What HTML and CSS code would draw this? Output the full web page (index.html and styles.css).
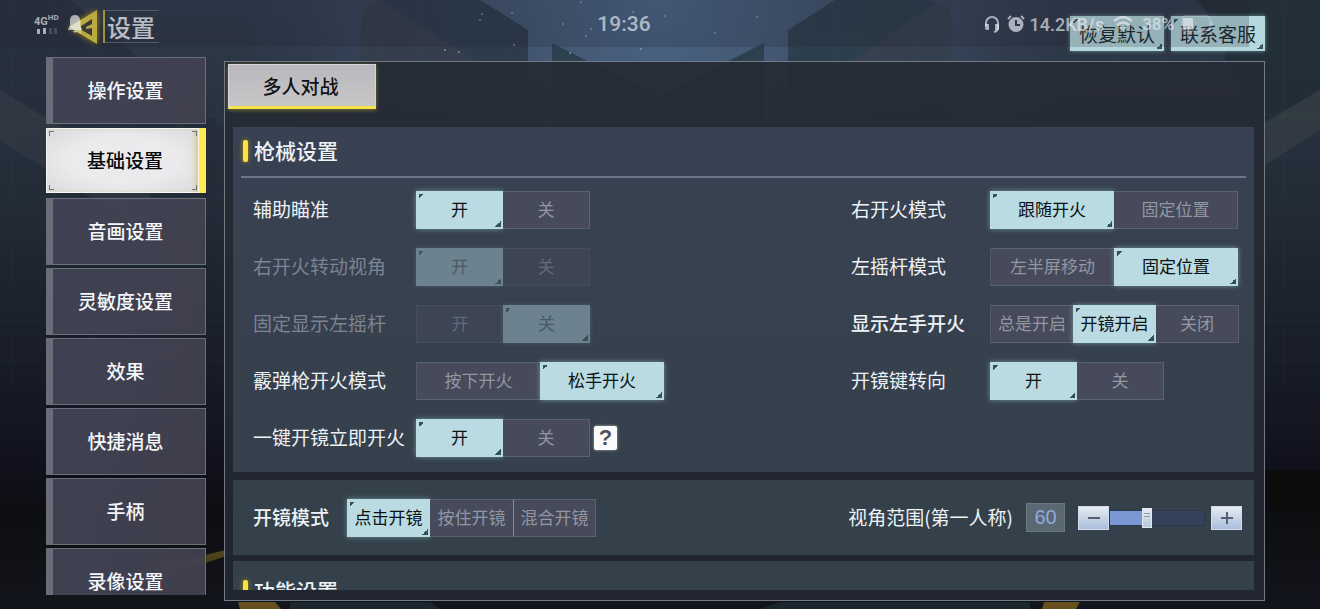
FILE: index.html
```html
<!DOCTYPE html>
<html lang="zh-CN">
<head>
<meta charset="utf-8">
<meta name="viewport" content="width=device-width, initial-scale=1">
<title>设置</title>
<link rel="stylesheet" href="styles.css">
</head>
<body>
<svg class="backdrop" viewBox="0 0 1320 609" preserveAspectRatio="xMidYMid slice" aria-hidden="true">
  <defs>
    <linearGradient id="base" x1="0" y1="0" x2="0" y2="1">
      <stop offset="0" stop-color="#303b4b"/><stop offset=".3" stop-color="#232d38"/>
      <stop offset=".62" stop-color="#171b27"/><stop offset=".78" stop-color="#10101b"/>
      <stop offset=".85" stop-color="#0d0e10"/><stop offset="1" stop-color="#13151c"/>
    </linearGradient>
    <radialGradient id="sky" gradientUnits="userSpaceOnUse" cx="660" cy="0" r="430">
      <stop offset="0" stop-color="#4b6685"/><stop offset=".55" stop-color="#43536f" stop-opacity=".75"/>
      <stop offset="1" stop-color="#354257" stop-opacity="0"/>
    </radialGradient>
    <pattern id="grid" width="41" height="41" patternUnits="userSpaceOnUse" x="12" y="33">
      <path d="M0 .5H41M.5 0V41" stroke="#8ab0c0" stroke-opacity=".03"/>
    </pattern>
    <linearGradient id="beam" x1="0" y1="1" x2="1" y2="0">
      <stop offset="0" stop-color="#8c7420" stop-opacity="0"/><stop offset="1" stop-color="#a08424" stop-opacity=".5"/>
    </linearGradient>
  </defs>
  <rect width="1320" height="609" fill="url(#base)"/>
  <rect width="1320" height="300" fill="url(#sky)"/>
  <path d="M0 0H70L225 130V230L0 90Z" fill="#252b38" opacity=".6"/>
  <path d="M0 90L150 180V235L0 140Z" fill="#343b46" opacity=".6"/>
  <path d="M378 0H480L528 30V200H361V12Z" fill="#293847" opacity=".85"/>
  <path d="M380 0L490 70H361V0Z" fill="#39404e" opacity=".7"/>
  <path d="M835 0H930L951 8V200H788V30Z" fill="#293c48" opacity=".85"/>
  <path d="M940 0L840 70H951V0Z" fill="#3b4251" opacity=".7"/>
  <path d="M552 43L658 97L764 43V200H552Z" fill="#2c4050"/>
  <path d="M1195 0H1320V90L1265 125L1225 62V30Z" fill="#202d35" opacity=".8"/>
  <path d="M1320 90L1265 122V165L1320 130Z" fill="#363f45" opacity=".7"/>
  <path d="M1265 470H1320V510H1265Z" fill="#0b0c0b"/>
  <rect width="1320" height="390" fill="url(#grid)"/>
  <path d="M100 580L230 549V555L120 590Z" fill="url(#beam)"/>
  <path d="M238 602H275L281 609H240ZM1044 602H1080L1076 609H1042Z" fill="#66501f"/>
  <path d="M290 602H430L440 609H290ZM780 602H1030V609H760Z" fill="#1f3238" opacity=".6"/>
  <g fill="#a9bdd0" opacity=".6">
    <circle cx="482" cy="14" r="1"/><circle cx="480" cy="20" r="1"/><circle cx="512" cy="13" r="1"/><circle cx="445" cy="50" r="1"/>
    <circle cx="459" cy="52" r="1"/><circle cx="514" cy="45" r="1"/><circle cx="563" cy="24" r="1"/><circle cx="591" cy="29" r="1"/>
    <circle cx="586" cy="36" r="1"/><circle cx="570" cy="53" r="1"/><circle cx="633" cy="12" r="1"/><circle cx="581" cy="2" r="1"/>
    <circle cx="665" cy="16" r="1"/><circle cx="715" cy="33" r="1"/><circle cx="757" cy="17" r="1"/><circle cx="641" cy="49" r="1"/>
  </g>
</svg>

<div class="app">
  <header class="topbar">
    <div class="brand">
      <button class="back" type="button" aria-label="返回">
        <svg viewBox="0 0 32 38" aria-hidden="true">
          <path d="M30 2V36L2 19Z" fill="#e3cd45"/>
          <path d="M25 11V16L19 19V21L25 20V28L11 20Z" fill="#41423a"/>
          <path d="M2 19L14 12V26Z" fill="#fff08a"/>
        </svg>
      </button>
      <h1 class="title">设置</h1>
    </div>
    <div class="actions">
      <button class="action" type="button">恢复默认</button>
      <button class="action" type="button">联系客服</button>
    </div>
  </header>

  <div class="content">
    <nav class="side" aria-label="设置分类">
      <button class="side-item" type="button">操作设置</button>
      <button class="side-item side-item-active" type="button" aria-current="page"><span class="brackets"></span>基础设置</button>
      <button class="side-item" type="button">音画设置</button>
      <button class="side-item" type="button">灵敏度设置</button>
      <button class="side-item" type="button">效果</button>
      <button class="side-item" type="button">快捷消息</button>
      <button class="side-item" type="button">手柄</button>
      <button class="side-item" type="button">录像设置</button>
    </nav>

    <main class="panel">
      <button class="tab" type="button">多人对战</button>
      <div class="scroller">
        <section class="card">
          <h2 class="section-title">枪械设置</h2>
          <div class="columns">
            <div class="column">
              <div class="row" role="radiogroup" aria-labelledby="l1">
                <span class="label" id="l1">辅助瞄准</span>
                <div class="segments">
                  <label class="seg seg-short"><input type="radio" name="aim" checked><span>开</span></label>
                  <label class="seg seg-short"><input type="radio" name="aim"><span>关</span></label>
                </div>
              </div>
              <div class="row row-disabled" role="radiogroup" aria-labelledby="l2">
                <span class="label" id="l2">右开火转动视角</span>
                <div class="segments">
                  <label class="seg seg-short"><input type="radio" name="turn" checked disabled><span>开</span></label>
                  <label class="seg seg-short"><input type="radio" name="turn" disabled><span>关</span></label>
                </div>
              </div>
              <div class="row row-disabled" role="radiogroup" aria-labelledby="l3">
                <span class="label" id="l3">固定显示左摇杆</span>
                <div class="segments">
                  <label class="seg seg-short"><input type="radio" name="stick" disabled><span>开</span></label>
                  <label class="seg seg-short"><input type="radio" name="stick" checked disabled><span>关</span></label>
                </div>
              </div>
              <div class="row" role="radiogroup" aria-labelledby="l4">
                <span class="label" id="l4">霰弹枪开火模式</span>
                <div class="segments">
                  <label class="seg seg-wide"><input type="radio" name="shotgun"><span>按下开火</span></label>
                  <label class="seg seg-wide"><input type="radio" name="shotgun" checked><span>松手开火</span></label>
                </div>
              </div>
              <div class="row" role="radiogroup" aria-labelledby="l5">
                <span class="label" id="l5">一键开镜立即开火</span>
                <div class="segments">
                  <label class="seg seg-short"><input type="radio" name="quick" checked><span>开</span></label>
                  <label class="seg seg-short"><input type="radio" name="quick"><span>关</span></label>
                </div>
                <button class="help" type="button">?</button>
              </div>
            </div>

            <div class="column column-right">
              <div class="row" role="radiogroup" aria-labelledby="r1">
                <span class="label" id="r1">右开火模式</span>
                <div class="segments">
                  <label class="seg seg-wide"><input type="radio" name="rfire" checked><span>跟随开火</span></label>
                  <label class="seg seg-wide"><input type="radio" name="rfire"><span>固定位置</span></label>
                </div>
              </div>
              <div class="row" role="radiogroup" aria-labelledby="r2">
                <span class="label" id="r2">左摇杆模式</span>
                <div class="segments">
                  <label class="seg seg-wide"><input type="radio" name="lstick"><span>左半屏移动</span></label>
                  <label class="seg seg-wide"><input type="radio" name="lstick" checked><span>固定位置</span></label>
                </div>
              </div>
              <div class="row" role="radiogroup" aria-labelledby="r3">
                <span class="label label-strong" id="r3">显示左手开火</span>
                <div class="segments">
                  <label class="seg seg-mid"><input type="radio" name="lfire"><span>总是开启</span></label>
                  <label class="seg seg-mid"><input type="radio" name="lfire" checked><span>开镜开启</span></label>
                  <label class="seg seg-mid"><input type="radio" name="lfire"><span>关闭</span></label>
                </div>
              </div>
              <div class="row" role="radiogroup" aria-labelledby="r4">
                <span class="label" id="r4">开镜键转向</span>
                <div class="segments">
                  <label class="seg seg-short"><input type="radio" name="scopekey" checked><span>开</span></label>
                  <label class="seg seg-short"><input type="radio" name="scopekey"><span>关</span></label>
                </div>
              </div>
            </div>
          </div>
        </section>

        <section class="card card-scope">
          <div class="row row-auto" role="radiogroup" aria-labelledby="s1">
            <span class="label label-strong" id="s1">开镜模式</span>
            <div class="segments">
              <label class="seg seg-mid"><input type="radio" name="scope" checked><span>点击开镜</span></label>
              <label class="seg seg-mid"><input type="radio" name="scope"><span>按住开镜</span></label>
              <label class="seg seg-mid seg-divided"><input type="radio" name="scope"><span>混合开镜</span></label>
            </div>
          </div>
          <div class="fov">
            <label class="label" for="fov">视角范围(第一人称)</label>
            <output class="fov-value" for="fov">60</output>
            <div class="stepper">
              <button class="step" type="button" aria-label="减少"><svg viewBox="0 0 14 14" aria-hidden="true"><path d="M1 7H13"/></svg></button>
              <input class="slider" id="fov" type="range" min="0" max="100" value="38">
              <button class="step" type="button" aria-label="增加"><svg viewBox="0 0 14 14" aria-hidden="true"><path d="M1 7H13M7 1V13"/></svg></button>
            </div>
          </div>
        </section>

        <section class="card card-next">
          <h2 class="section-title">功能设置</h2>
        </section>
      </div>
    </main>
  </div>
</div>

<div class="status">
  <div class="status-left">
    <div class="signal">
      <span class="net">4G<sup>HD</sup></span>
      <svg class="bars" viewBox="0 0 20 6" aria-hidden="true">
        <rect x="0" y="1" width="3" height="5"/><rect x="6" y="0" width="3" height="6"/>
        <rect x="12" y="0" width="3" height="6" opacity=".25"/><rect x="17" y="0" width="3" height="6" opacity=".25"/>
      </svg>
    </div>
    <svg class="bell" viewBox="0 0 14 18" aria-hidden="true"><path d="M7 0C3 0 2 3 2 6V11L0 14V15H14V14L12 11V6C12 3 11 0 7 0ZM5 16H9C9 18 5 18 5 16Z"/></svg>
  </div>
  <span class="clock">19:36</span>
  <div class="status-right">
    <svg class="headset" viewBox="0 0 16 18" aria-hidden="true"><path d="M2 11V8A6 6 0 0 1 14 8V13Q14 16 10 17" fill="none" stroke="currentColor" stroke-width="2"/><path d="M1 9H5V15H3Q1 15 1 13ZM11 9H15V13Q15 15 13 15H11Z" fill="currentColor"/></svg>
    <svg class="alarm" viewBox="0 0 18 18" aria-hidden="true"><path fill-rule="evenodd" d="M9 2A7.500 7.500 0 1 1 9 17A7.500 7.500 0 1 1 9 2ZM8 5V11H13V9H10V5Z" fill="currentColor"/><path d="M1 4L4 1M17 4L14 1" stroke="currentColor" stroke-width="2"/></svg>
    <span class="speed">14.2KB/s</span>
    <svg class="wifi" viewBox="0 0 20 16" aria-hidden="true"><path d="M1 5Q10 -3 19 5M4 9Q10 4 16 9" fill="none" stroke="currentColor" stroke-width="2.400"/><path d="M6 11.500Q10 8 14 11.500L10 16Z" fill="currentColor"/></svg>
    <span class="percent">38%</span>
    <svg class="battery" viewBox="0 0 32 18" aria-hidden="true"><rect x="1" y="1" width="28" height="15" rx="3" fill="none" stroke="currentColor" opacity=".6"/><path d="M31 6V11" stroke="currentColor" stroke-width="1.500" opacity=".6"/><rect x="2" y="3" width="10" height="11" rx="1" fill="currentColor"/></svg>
  </div>
</div>
</body>
</html>
```
FILE: styles.css
```css
* {
  box-sizing: border-box;
}

body {
  margin: 0;
  overflow: hidden;
  background: #12141d;
  color: #eef2f6;
  font-family: "Noto Sans CJK SC", "Noto Sans", sans-serif;
}

button,
input {
  margin: 0;
  padding: 0;
  border: 0;
  border-radius: 0;
  font: inherit;
}

.backdrop {
  position: absolute;
  inset: 0;
  width: 100%;
  height: 100%;
}

.app {
  position: relative;
  display: flex;
  flex-direction: column;
  height: 100vh;
  padding: 0 55px 8px 46px;
}

/* Header */
.topbar {
  display: flex;
  justify-content: space-between;
  flex: none;
  height: 57px;
}

.brand {
  display: flex;
  align-items: flex-start;
  gap: 4px;
  padding: 8px 0 0 21px;
}

.back {
  width: 32px;
  height: 38px;
  background: none;
}

.back svg {
  display: block;
  width: 32px;
  height: 38px;
  filter: drop-shadow(0 0 3px #b99b1c);
}

.title {
  width: 56px;
  margin: 2px 0 0;
  padding-left: 2px;
  border-left: 2px solid #c8b13a;
  background:
    linear-gradient(#5d6874, #5d6874) 0 0 / 100% 1px no-repeat,
    linear-gradient(#5d6874, #5d6874) 0 100% / 100% 1px no-repeat;
  color: #e2e5ea;
  font-size: 24px;
  font-weight: 500;
  line-height: 33px;
  white-space: nowrap;
}

.actions {
  display: flex;
  gap: 7px;
  padding-top: 16px;
}

.action {
  width: 94px;
  height: 35px;
  background:
    linear-gradient(135deg, #3c565e 50%, transparent 50%) 3px 3px / 5px 5px no-repeat,
    linear-gradient(315deg, #3c565e 50%, transparent 50%) calc(100% - 2px) calc(100% - 2px) / 6px 6px no-repeat,
    #b4d8dc;
  box-shadow: 0 0 4px #6d9198;
  color: #1c282d;
  font-size: 19px;
  line-height: 34px;
}

/* Body */
.content {
  display: flex;
  flex: 1;
  gap: 18px;
  min-height: 0;
}

.side {
  display: flex;
  flex: none;
  flex-direction: column;
  gap: 3px;
  width: 160px;
  margin-bottom: 6px;
  overflow: hidden;
}

.side-item {
  flex: none;
  height: 67px;
  padding: 0 7px 3px 0;
  border: 1px solid #69717a;
  border-left: 7px solid #686d77;
  background: linear-gradient(100deg, rgba(65, 67, 84, .95), rgba(66, 65, 80, .93));
  color: #f4f6f9;
  font-size: 19px;
  font-weight: 500;
}

.side-item-active {
  position: relative;
  height: 65px;
  margin: 1px 0 2px;
  padding: 0 0 3px 5px;
  border: 0;
  border-right: 7px solid #ffe94e;
  background: radial-gradient(#ebebed 50%, #d9d9dc);
  box-shadow: inset 0 0 0 1px #f5f5f5, inset -4px 0 4px #d5cd91;
  color: #08090b;
}

.brackets {
  position: absolute;
  inset: 3px 2px 3px 3px;
  background:
    linear-gradient(#747474, #747474) 0 0 / 5px 1px,
    linear-gradient(#747474, #747474) 0 0 / 1px 5px,
    linear-gradient(#747474, #747474) 100% 0 / 5px 1px,
    linear-gradient(#747474, #747474) 100% 0 / 1px 5px,
    linear-gradient(#747474, #747474) 0 100% / 5px 1px,
    linear-gradient(#747474, #747474) 0 100% / 1px 5px,
    linear-gradient(#747474, #747474) 100% 100% / 5px 1px,
    linear-gradient(#747474, #747474) 100% 100% / 1px 5px;
  background-repeat: no-repeat;
}

.panel {
  display: flex;
  flex: 1;
  flex-direction: column;
  min-width: 0;
  margin-top: 4px;
  padding: 2px 10px 10px 8px;
  border: 1px solid #707b86;
  background: linear-gradient(rgba(38, 43, 53, .93), rgba(34, 38, 51, .95));
}

.tab {
  flex: none;
  width: 148px;
  height: 45px;
  margin-left: -5px;
  padding-right: 3px;
  border: 1px solid #d5d5d7;
  border-bottom: 3px solid #f6e34c;
  background: linear-gradient(#b9b9bd, #c7c7c9);
  box-shadow: 0 1px 4px #7c7434;
  color: #101114;
  font-size: 19px;
  font-weight: 500;
  line-height: 40px;
}

.scroller {
  display: flex;
  flex: 1;
  flex-direction: column;
  min-height: 0;
  margin-top: 18px;
  overflow: hidden;
}

.card {
  flex: none;
  padding: 8px 8px 15px;
  background: linear-gradient(rgba(58, 67, 84, .92), rgba(54, 66, 77, .95));
}

.section-title {
  display: flex;
  align-items: center;
  gap: 6px;
  margin: 0;
  padding: 0 2px 10px;
  border-bottom: 2px solid #6b7787;
  font-size: 21px;
  font-weight: 500;
  line-height: 31px;
}

.section-title::before {
  width: 5px;
  height: 22px;
  border-radius: 2px;
  background: #f8e341;
  box-shadow: 0 0 5px #a58b17;
  content: "";
}

.columns {
  display: flex;
  justify-content: space-between;
  padding: 13px 7px 0 12px;
}

.column {
  display: flex;
  flex-direction: column;
  gap: 19px;
}

.row {
  display: grid;
  grid-template-columns: 163px auto auto;
  align-items: center;
  justify-content: start;
  height: 38px;
}

.column-right .row {
  grid-template-columns: 139px auto;
}

.row-auto {
  grid-template-columns: 94px auto;
}

.label {
  padding-bottom: 2px;
  font-size: 19px;
  line-height: 28px;
  white-space: nowrap;
}

.label-strong {
  font-weight: 500;
}

.row-disabled .label {
  color: #7b8492;
}

.segments {
  display: flex;
}

.seg {
  position: relative;
  display: block;
  height: 38px;
}

.seg-short {
  width: 87px;
}

.seg-mid {
  width: 83px;
}

.seg-wide {
  width: 124px;
}

.seg input {
  position: absolute;
  inset: 0;
  width: 100%;
  height: 100%;
  opacity: 0;
}

.seg span {
  display: block;
  height: 38px;
  border: 1px solid #5b6370;
  border-left-color: #515866;
  background: #464a5a;
  color: #9297a2;
  font-size: 17px;
  line-height: 34px;
  text-align: center;
  white-space: nowrap;
}

.seg:not(:last-child) span {
  border-right: 0;
}

.seg:not(:first-child) span {
  border-left: 0;
}

.seg-divided:not(:first-child) span {
  border-left: 1px solid #838995;
}

.seg input:checked + span {
  border: 0;
  background:
    linear-gradient(135deg, #35515a 50%, transparent 50%) 3px 3px / 5px 5px no-repeat,
    linear-gradient(315deg, #35515a 50%, transparent 50%) calc(100% - 2px) calc(100% - 2px) / 6px 6px no-repeat,
    #b9dbe1;
  box-shadow: 0 0 5px #72949c;
  color: #0b1114;
  line-height: 36px;
}

.row-disabled .seg span {
  border-color: #454e5c;
  background: #3d4454;
  color: #626a78;
}

.row-disabled .seg input:checked + span {
  background:
    linear-gradient(135deg, #3c505a 50%, transparent 50%) 3px 3px / 5px 5px no-repeat,
    linear-gradient(315deg, #3c505a 50%, transparent 50%) calc(100% - 2px) calc(100% - 2px) / 6px 6px no-repeat,
    #6c828e;
  box-shadow: 0 0 4px #4c606b;
  color: #4a5965;
}

.help {
  width: 23px;
  height: 24px;
  margin-left: 4px;
  border-radius: 2px;
  background: #fafafa;
  box-shadow: 0 0 3px #aeb3b8;
  color: #50545a;
  font-family: "Liberation Sans", sans-serif;
  font-size: 22px;
  font-weight: 700;
  line-height: 24px;
}

.card-scope {
  display: flex;
  align-items: center;
  justify-content: space-between;
  height: 75px;
  margin-top: 8px;
  padding: 0 12px 0 20px;
  background: rgba(54, 66, 76, .95);
}

.card-next {
  margin-top: 6px;
  padding-top: 14px;
  background: rgba(54, 66, 76, .95);
}

.fov {
  display: flex;
  align-items: center;
}

.fov-value {
  width: 39px;
  height: 29px;
  margin: 0 13px;
  border: 1px solid #69777f;
  background: #596872;
  color: #93aade;
  font-family: "Liberation Sans", sans-serif;
  font-size: 20px;
  line-height: 27px;
  text-align: center;
}

.stepper {
  display: flex;
  align-items: center;
}

.step {
  display: grid;
  place-items: center;
  width: 31px;
  height: 24px;
  border: 1px solid #d2dcea;
  background: linear-gradient(#e6ecf1, #a9bddb);
}

.step svg {
  width: 14px;
  height: 14px;
  fill: none;
  stroke: #566073;
  stroke-width: 2;
}

.slider {
  width: 96px;
  height: 24px;
  margin-right: 6px;
  appearance: none;
  background: none;
}

.slider::-webkit-slider-runnable-track {
  height: 16px;
  border: 1px solid #2b374a;
  background: linear-gradient(90deg, #7b98d4 38%, #34425a 38%);
}

.slider::-webkit-slider-thumb {
  width: 10px;
  height: 20px;
  margin-top: -3px;
  appearance: none;
  border: 1px solid #e0e8ee;
  background:
    linear-gradient(#8f9ca8, #8f9ca8) 50% 4px / 6px 1px no-repeat,
    linear-gradient(#8f9ca8, #8f9ca8) 50% 7px / 6px 1px no-repeat,
    linear-gradient(#e5ebee, #b5c7d9);
}

/* Device status overlay */
.status {
  position: absolute;
  top: 0;
  right: 71px;
  left: 0;
  display: grid;
  grid-template-columns: 1fr auto 1fr;
  align-items: center;
  height: 47px;
  padding: 0 36px 0 34px;
  background: rgba(31, 32, 46, .2);
  color: rgba(232, 236, 242, .68);
  font-family: Roboto, sans-serif;
  font-weight: 500;
  pointer-events: none;
}

.status-left {
  display: flex;
  align-items: center;
  gap: 8px;
}

.signal {
  width: 26px;
}

.net {
  display: block;
  font-size: 11px;
  font-weight: 700;
  line-height: 12px;
  white-space: nowrap;
}

.net sup {
  font-size: 8px;
  line-height: 8px;
}

.bars {
  display: block;
  width: 20px;
  height: 6px;
  margin: 0 0 0 3px;
  fill: currentColor;
}

.bell {
  width: 14px;
  height: 18px;
  fill: currentColor;
}

.clock {
  padding-left: 1px;
  font-size: 21px;
  line-height: 48px;
}

.status-right {
  display: flex;
  align-items: center;
  justify-content: flex-end;
}

.headset {
  width: 16px;
  height: 18px;
  margin-right: 7px;
}

.alarm {
  width: 18px;
  height: 18px;
  margin-right: 4px;
}

.speed {
  margin-right: 9px;
  font-size: 18px;
}

.wifi {
  width: 20px;
  height: 16px;
  margin-right: 9px;
}

.percent {
  margin-right: 7px;
  font-size: 17px;
}

.battery {
  width: 32px;
  height: 18px;
}
```
